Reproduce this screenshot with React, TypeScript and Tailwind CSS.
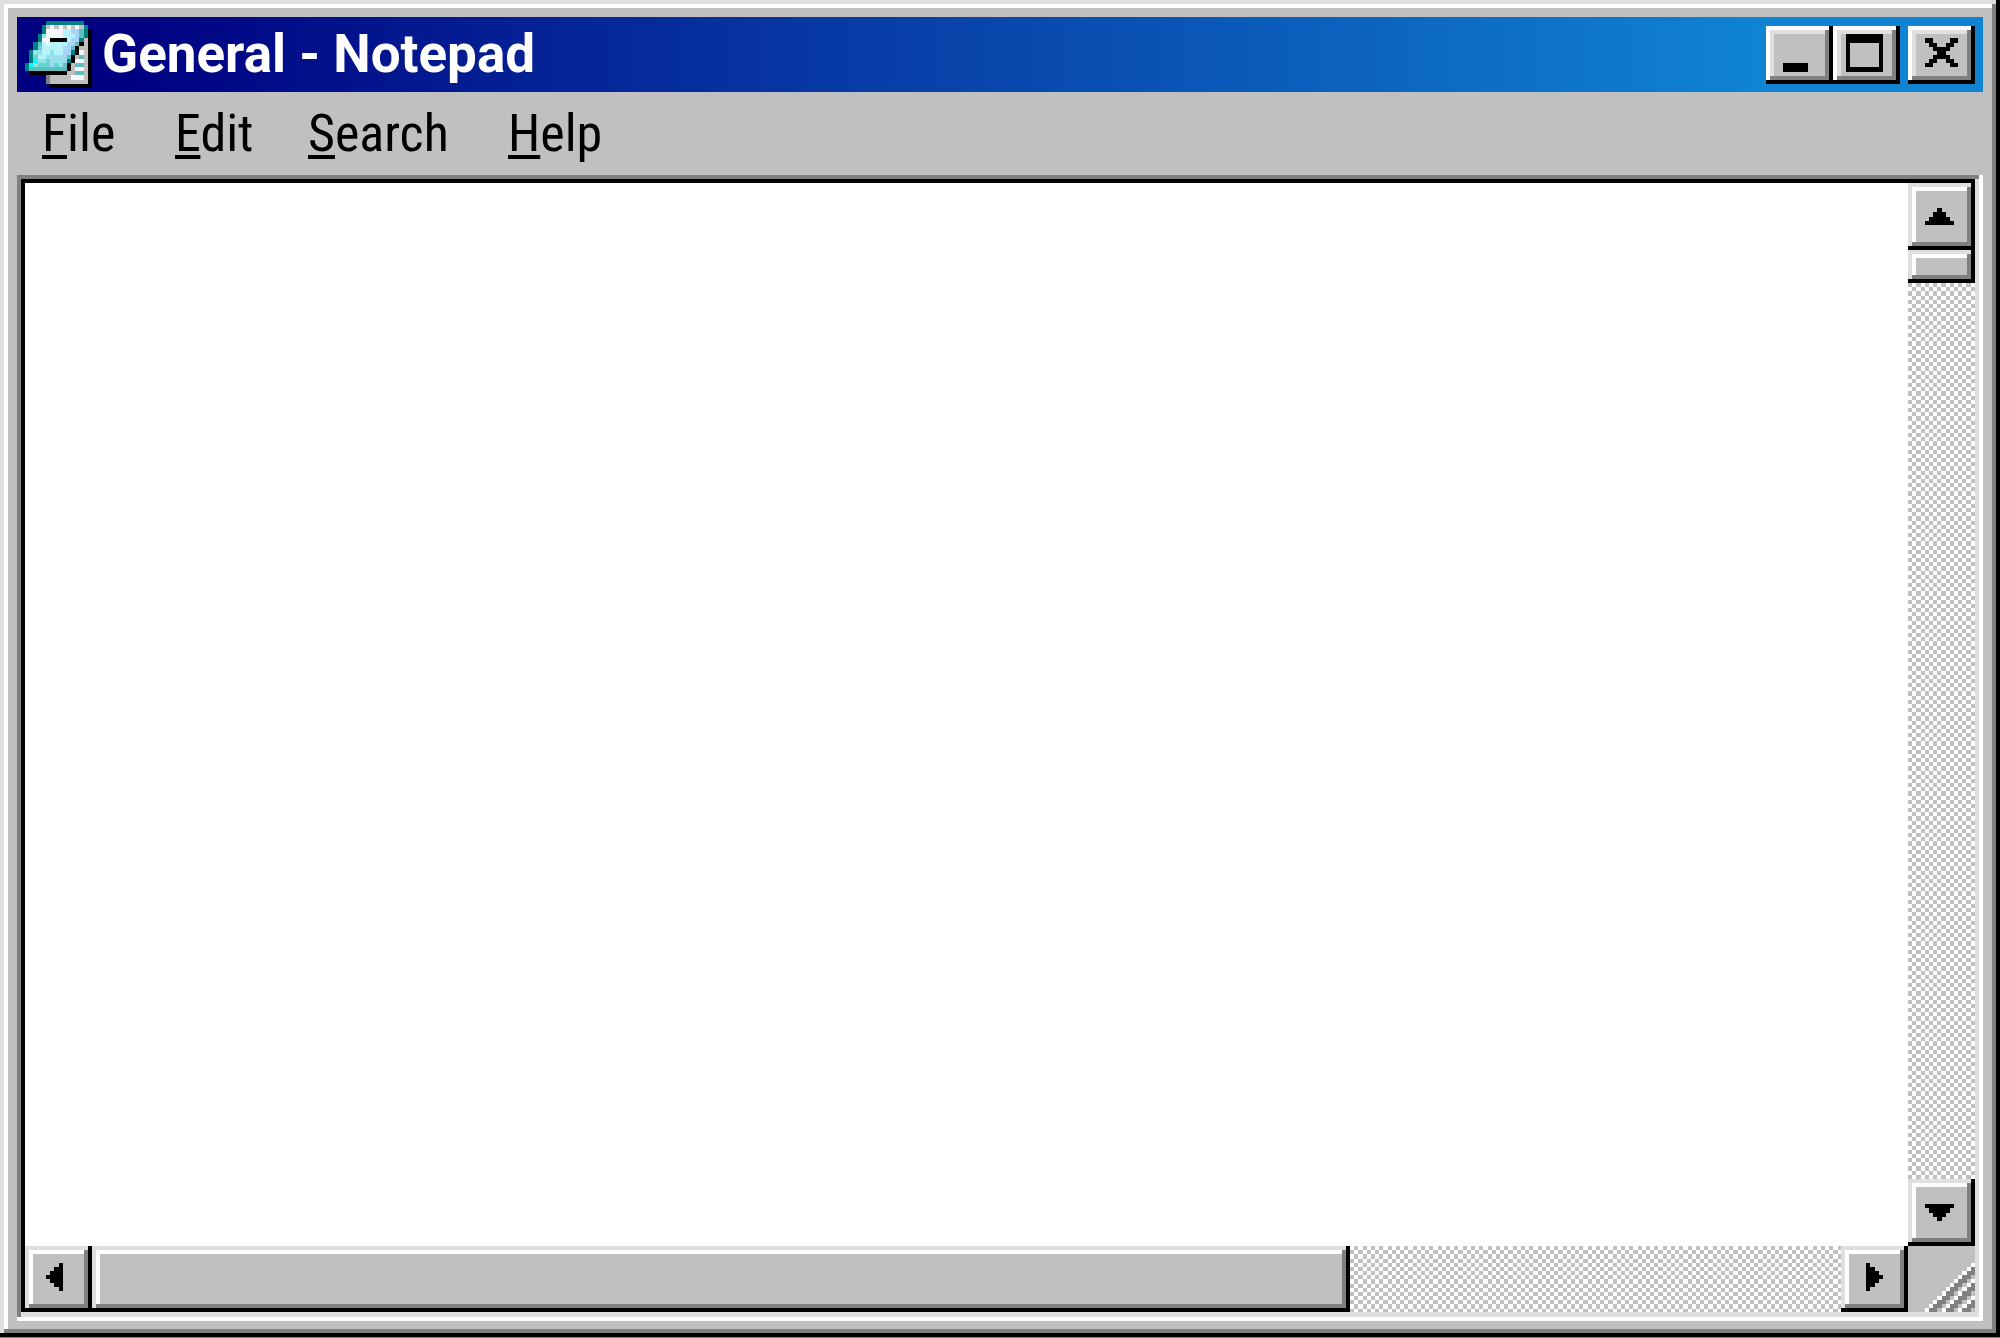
import type { ReactNode } from "react";

const ICON_COLORS: Record<string, string> = {
  T: "#008080",
  C: "#5fbfbf",
  A: "#00ffff",
  L: "#b4f4fa",
  W: "#f4f8f8",
  P: "#a8d4f8",
  G: "#c0c0c0",
  D: "#808080",
  K: "#000000",
  M: "#66d4d4",
  B: "#90e4e8",
};

const NOTEPAD_ICON = [
  ".....TTTTTTTTT..",
  "....TGWGWGWGWGT.",
  "....TWWWWLLPPCTK",
  "...TBWWWWLLLPCTK",
  "...TWWKKKKLPPTGK",
  "..TCLWLLLLPPCKGK",
  "..TMLLLLLPPCKGGK",
  ".TBBLLBLLPPTKWGK",
  ".TMLLBPBPBCKGCGK",
  ".TABBMBBBPTKWWGK",
  "TABMMMPMBCKGCCGK",
  "TCCCCCCCCCKGWWGK",
  ".KKKKKKKKKGGCCGK",
  ".....DGGGGGWWWGK",
  ".....DGGGGGGGGGK",
  "......KKKKKKKKKK",
];

function NotepadIcon() {
  return (
    <svg viewBox="0 0 16 16" className="size-[67px] shrink-0" shapeRendering="crispEdges" aria-hidden="true">
      {NOTEPAD_ICON.flatMap((row, y) =>
        row.split("").map((c, x) =>
          c === "." ? null : <rect key={`${x}-${y}`} x={x} y={y} width="1" height="1" fill={ICON_COLORS[c]} />
        )
      )}
    </svg>
  );
}

function CaptionButton({ label, d }: { label: string; d: string }) {
  return (
    <button
      type="button"
      aria-label={label}
      className="h-[58px] w-[67px] bg-[#c0c0c0] shadow-[inset_-4px_-4px_0_#000,inset_4px_4px_0_#fff,inset_-8px_-8px_0_#808080,inset_8px_8px_0_#dfdfdf]"
    >
      <svg viewBox="0 0 16 14" className="h-full w-full" shapeRendering="crispEdges" aria-hidden="true">
        <path d={d} fillRule="evenodd" />
      </svg>
    </button>
  );
}

function ScrollButton({ label, d }: { label: string; d: string }) {
  return (
    <button
      type="button"
      aria-label={label}
      className="max-h-full size-[67px] shrink-0 bg-[#c0c0c0] shadow-[inset_-4px_-4px_0_#000,inset_4px_4px_0_#dfdfdf,inset_-8px_-8px_0_#808080,inset_8px_8px_0_#fff]"
    >
      <svg viewBox="0 0 16 16" className="h-full w-full" shapeRendering="crispEdges" aria-hidden="true">
        <path d={d} />
      </svg>
    </button>
  );
}

const EDGES = [0, 4, 8, 13, 17, 21, 25];

function Dither({ id, phase }: { id: string; phase: number }) {
  const cells: ReactNode[] = [];
  for (let y = 0; y < 6; y++) {
    for (let x = 0; x < 6; x++) {
      if ((x + y) % 2 === phase) {
        cells.push(
          <rect
            key={`${x}-${y}`}
            x={EDGES[x]}
            y={EDGES[y]}
            width={EDGES[x + 1] - EDGES[x]}
            height={EDGES[y + 1] - EDGES[y]}
            fill="#c0c0c0"
          />
        );
      }
    }
  }
  return (
    <svg className="block h-full w-full" shapeRendering="crispEdges" aria-hidden="true">
      <pattern id={id} width="25" height="25" patternUnits="userSpaceOnUse">
        {cells}
      </pattern>
      <rect width="100%" height="100%" fill={`url(#${id})`} />
    </svg>
  );
}

function ResizeGrip() {
  const cells: ReactNode[] = [];
  for (let y = 4; y < 16; y++) {
    for (let x = 4; x < 16; x++) {
      const n = x + y - 19;
      if (n < 0 || n % 4 === 3) continue;
      cells.push(
        <rect key={`${x}-${y}`} x={x} y={y} width="1" height="1" fill={n % 4 === 0 ? "#ffffff" : "#808080"} />
      );
    }
  }
  return (
    <svg
      viewBox="0 0 16 16"
      className="h-full w-[67px] shrink-0 bg-[#c0c0c0]"
      preserveAspectRatio="none"
      shapeRendering="crispEdges"
      aria-hidden="true"
    >
      {cells}
    </svg>
  );
}

const MENU = [
  { name: "File", width: "w-[133px]" },
  { name: "Edit", width: "w-[133px]" },
  { name: "Search", width: "w-[200px]" },
  { name: "Help", width: "w-[133px]" },
];

export default function App() {
  return (
    <main className="flex h-screen flex-col border-b border-[#808080] bg-[#c0c0c0] px-[17px] pt-[17px] pb-4 shadow-[inset_-4px_-4px_0_#000,inset_4px_4px_0_#dfdfdf,inset_-8px_-8px_0_#808080,inset_8px_8px_0_#fff]">
      <header className="flex h-[75px] shrink-0 items-center bg-linear-to-r/srgb from-[#000080] from-5% to-[#1084d3] to-89% px-2">
        <NotepadIcon />
        <h1 className="ml-[10px] grow pb-[2px] font-[Roboto,sans-serif] text-[53px] leading-[60px] font-bold whitespace-nowrap text-white">
          General - Notepad
        </h1>
        <div className="flex">
          <CaptionButton label="Minimize" d="M4 9h6v2H4z" />
          <CaptionButton label="Maximize" d="M3 2h9v9H3zM4 4v6h7V4z" />
        </div>
        <div className="ml-2 flex">
          <CaptionButton
            label="Close"
            d="M4 3h2v1h1v1h2V4h1V3h2v1h-1v1h-1v1H9v1h1v1h1v1h1v1h-2V9H9V8H7v1H6v1H4V9h1V8h1V7h1V6H6V5H5V4H4z"
          />
        </div>
      </header>

      <nav className="flex h-[83px] shrink-0 items-center">
        {MENU.map(({ name, width }) => (
          <button
            key={name}
            type="button"
            className={`${width} pl-[25px] text-left font-['Roboto_Condensed',Roboto,sans-serif] text-[52px] leading-[60px] text-black`}
          >
            <span className="underline decoration-4 underline-offset-4">{name[0]}</span>
            {name.slice(1)}
          </button>
        ))}
      </nav>

      <section className="flex min-h-0 grow flex-col bg-white px-2 pt-2 pb-[9px] shadow-[inset_-4px_-4px_0_#fff,inset_4px_4px_0_#808080,inset_-8px_-9px_0_#dfdfdf,inset_8px_8px_0_#000]">
        <div className="flex min-h-0 grow">
          <textarea
            aria-label="Document text"
            className="min-w-0 grow resize-none bg-white p-2 font-[Roboto,sans-serif] text-[52px] outline-none"
          />
          <div className="flex w-[67px] shrink-0 flex-col">
            <ScrollButton label="Scroll up" d="M7 6h1v1h1v1h1v1h1v1H4V9h1V8h1V7h1z" />
            <div className="h-[33px] shrink-0 bg-[#c0c0c0] shadow-[inset_-4px_-4px_0_#000,inset_4px_4px_0_#dfdfdf,inset_-8px_-8px_0_#808080,inset_8px_8px_0_#fff]" />
            <div className="min-h-0 grow">
              <Dither id="dither-vertical" phase={0} />
            </div>
            <ScrollButton label="Scroll down" d="M4 6h7v1h-1v1H9v1H8v1H7V9H6V8H5V7H4z" />
          </div>
        </div>
        <div className="flex h-[66px] shrink-0">
          <ScrollButton label="Scroll left" d="M9 4v7H8v-1H7V9H6V8H5V7h1V6h1V5h1V4z" />
          <div className="flex min-w-0 grow">
            <div className="grow-[1259] basis-0 bg-[#c0c0c0] shadow-[inset_-4px_-4px_0_#000,inset_4px_4px_0_#dfdfdf,inset_-8px_-8px_0_#808080,inset_8px_8px_0_#fff]" />
            <div className="grow-[491] basis-0">
              <Dither id="dither-horizontal" phase={1} />
            </div>
          </div>
          <ScrollButton label="Scroll right" d="M6 4h1v1h1v1h1v1h1v1H9v1H8v1H7v1H6z" />
          <ResizeGrip />
        </div>
      </section>
    </main>
  );
}
